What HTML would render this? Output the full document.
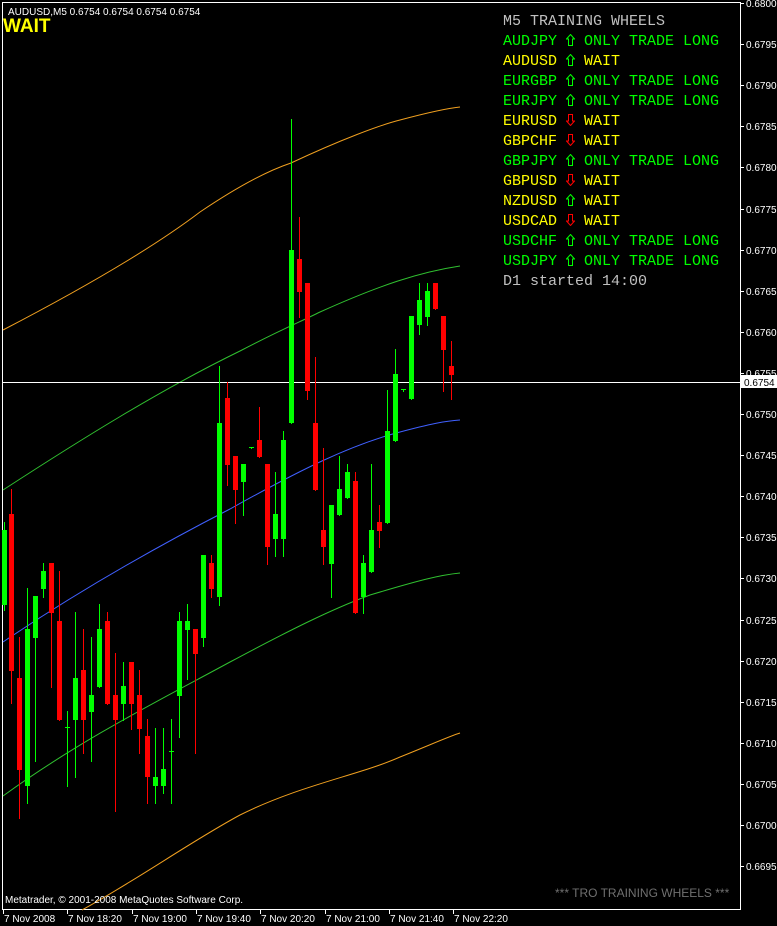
<!DOCTYPE html>
<html><head><meta charset="utf-8"><style>
html,body{margin:0;padding:0;background:#000;}
body{width:777px;height:926px;position:relative;overflow:hidden;font-family:"Liberation Sans",sans-serif;}
svg{position:absolute;left:0;top:0;}
.panel{position:absolute;left:503px;top:12px;font-family:"Liberation Mono",monospace;font-size:15px;line-height:20px;white-space:pre;}
.g{color:#00ff00}.y{color:#ffff00}.w{color:#c0c0c0}
.a{display:inline-block;width:9px;height:12px;vertical-align:-1px;}
</style></head><body>
<svg width="777" height="926" xmlns="http://www.w3.org/2000/svg" shape-rendering="crispEdges">
<rect x="2.5" y="2.5" width="738" height="907" fill="none" stroke="#fff" stroke-width="1"/>
<g fill="none" stroke-width="1" shape-rendering="auto">
<path d="M3,330 C80,290 150,250 200,212 C240,185 270,170 291,163 C340,140 380,125 400,120 C430,112 450,108 460,107" stroke="#f0a020"/>
<path d="M3,490 C80,440 160,390 240,351 C280,330 300,322 320,312 C380,285 420,272 460,266" stroke="#30c030"/>
<path d="M3,642 C80,590 160,545 230,509 C300,470 350,445 400,432 C430,424 445,421 460,420" stroke="#4060ff"/>
<path d="M3,796 C80,740 160,700 230,662 C290,630 330,610 370,595 C420,580 440,575 460,573" stroke="#30c030"/>
<path d="M82,910 C140,878 190,842 240,815 C300,785 360,775 400,757 C430,745 450,736 460,733" stroke="#f0a020"/>
</g>
<line x1="3" y1="382.5" x2="740" y2="382.5" stroke="#fff"/>
<g id="c"></g>
<g fill="#fff" font-size="10" font-family="Liberation Sans,sans-serif">
<text x="8" y="15" font-size="10">AUDUSD,M5  0.6754 0.6754 0.6754 0.6754</text>
<text x="5" y="903" font-size="10">Metatrader, © 2001-2008 MetaQuotes Software Corp.</text>
<text x="555" y="897" font-size="12" fill="#707070">*** TRO TRAINING WHEELS ***</text>
</g>
<text x="3" y="32" font-size="19" font-weight="bold" fill="#ffff00" font-family="Liberation Sans,sans-serif">WAIT</text>
<g id="ax" fill="#fff" font-size="10" font-family="Liberation Sans,sans-serif"></g>
<rect x="741" y="375" width="36" height="13" fill="#fff"/>
<text x="744" y="386" font-size="10" fill="#000" font-family="Liberation Sans,sans-serif">0.6754</text>
</svg>
<div class="panel"><span class="w">M5 TRAINING WHEELS</span>
<span class="g">AUDJPY <svg class="a" viewBox="0 0 9 12" style="position:static"><path d="M4.5,0.5 L8.5,5 L6.5,5 L6.5,11.5 L2.5,11.5 L2.5,5 L0.5,5 Z" fill="none" stroke="#00ff00"/></svg> ONLY TRADE LONG</span>
<span class="y">AUDUSD <svg class="a" viewBox="0 0 9 12" style="position:static"><path d="M4.5,0.5 L8.5,5 L6.5,5 L6.5,11.5 L2.5,11.5 L2.5,5 L0.5,5 Z" fill="none" stroke="#00ff00"/></svg> WAIT</span>
<span class="g">EURGBP <svg class="a" viewBox="0 0 9 12" style="position:static"><path d="M4.5,0.5 L8.5,5 L6.5,5 L6.5,11.5 L2.5,11.5 L2.5,5 L0.5,5 Z" fill="none" stroke="#00ff00"/></svg> ONLY TRADE LONG</span>
<span class="g">EURJPY <svg class="a" viewBox="0 0 9 12" style="position:static"><path d="M4.5,0.5 L8.5,5 L6.5,5 L6.5,11.5 L2.5,11.5 L2.5,5 L0.5,5 Z" fill="none" stroke="#00ff00"/></svg> ONLY TRADE LONG</span>
<span class="y">EURUSD <svg class="a" viewBox="0 0 9 12" style="position:static"><path d="M4.5,11.5 L8.5,7 L6.5,7 L6.5,0.5 L2.5,0.5 L2.5,7 L0.5,7 Z" fill="none" stroke="#ff0000"/></svg> WAIT</span>
<span class="y">GBPCHF <svg class="a" viewBox="0 0 9 12" style="position:static"><path d="M4.5,11.5 L8.5,7 L6.5,7 L6.5,0.5 L2.5,0.5 L2.5,7 L0.5,7 Z" fill="none" stroke="#ff0000"/></svg> WAIT</span>
<span class="g">GBPJPY <svg class="a" viewBox="0 0 9 12" style="position:static"><path d="M4.5,0.5 L8.5,5 L6.5,5 L6.5,11.5 L2.5,11.5 L2.5,5 L0.5,5 Z" fill="none" stroke="#00ff00"/></svg> ONLY TRADE LONG</span>
<span class="y">GBPUSD <svg class="a" viewBox="0 0 9 12" style="position:static"><path d="M4.5,11.5 L8.5,7 L6.5,7 L6.5,0.5 L2.5,0.5 L2.5,7 L0.5,7 Z" fill="none" stroke="#ff0000"/></svg> WAIT</span>
<span class="y">NZDUSD <svg class="a" viewBox="0 0 9 12" style="position:static"><path d="M4.5,0.5 L8.5,5 L6.5,5 L6.5,11.5 L2.5,11.5 L2.5,5 L0.5,5 Z" fill="none" stroke="#00ff00"/></svg> WAIT</span>
<span class="y">USDCAD <svg class="a" viewBox="0 0 9 12" style="position:static"><path d="M4.5,11.5 L8.5,7 L6.5,7 L6.5,0.5 L2.5,0.5 L2.5,7 L0.5,7 Z" fill="none" stroke="#ff0000"/></svg> WAIT</span>
<span class="g">USDCHF <svg class="a" viewBox="0 0 9 12" style="position:static"><path d="M4.5,0.5 L8.5,5 L6.5,5 L6.5,11.5 L2.5,11.5 L2.5,5 L0.5,5 Z" fill="none" stroke="#00ff00"/></svg> ONLY TRADE LONG</span>
<span class="g">USDJPY <svg class="a" viewBox="0 0 9 12" style="position:static"><path d="M4.5,0.5 L8.5,5 L6.5,5 L6.5,11.5 L2.5,11.5 L2.5,5 L0.5,5 Z" fill="none" stroke="#00ff00"/></svg> ONLY TRADE LONG</span>
<span class="w">D1 started 14:00</span></div>
<script>
var C=[[4,522,610,530,605,'g'],[11,489,703,514,671,'r'],[19,637,818,678,770,'r'],[27,588,803,629,786,'g'],[35,596,761,596,638,'g'],[43,563,597,571,589,'g'],[51,563,687,563,613,'r'],[59,571,720,621,720,'r'],[67,711,786,727,729,'g'],[75,612,777,678,720,'g'],[83,629,753,670,720,'r'],[91,637,761,695,712,'g'],[99,604,687,629,687,'g'],[107,612,704,621,704,'r'],[115,653,811,695,720,'r'],[123,662,720,686,704,'g'],[131,662,729,662,704,'r'],[139,670,753,695,729,'r'],[147,719,803,736,777,'r'],[155,728,803,777,786,'g'],[163,728,793,769,786,'g'],[171,719,803,751,753,'g'],[179,612,737,621,696,'g'],[187,604,679,621,630,'g'],[195,629,753,629,654,'r'],[203,555,646,555,638,'g'],[211,555,597,563,589,'r'],[219,366,605,423,597,'g'],[227,382,485,398,465,'r'],[235,456,523,456,490,'r'],[243,464,515,464,482,'g'],[251,448,448,447,449,'g'],[259,407,457,440,457,'r'],[267,464,564,464,547,'r'],[275,472,556,514,539,'g'],[283,431,556,440,539,'g'],[291,119,423,250,423,'g'],[299,217,317,259,292,'r'],[307,283,399,283,391,'r'],[315,357,490,423,490,'r'],[323,448,564,530,547,'r'],[331,505,597,505,564,'g'],[339,456,515,489,515,'g'],[347,464,498,472,498,'g'],[355,472,613,481,613,'r'],[363,555,613,563,597,'g'],[371,464,572,530,572,'g'],[379,505,547,522,531,'r'],[387,390,523,431,523,'g'],[395,349,441,374,441,'g'],[403,389,391,389,391,'g'],[411,316,399,316,399,'g'],[419,283,334,300,325,'g'],[427,283,325,291,317,'g'],[435,283,309,283,309,'r'],[443,316,391,316,350,'r'],[451,341,399,366,375,'r']];
var s='';C.forEach(function(c){var col=c[5]=='g'?'#00ff00':'#ff0000';
s+='<rect x="'+c[0]+'" y="'+c[1]+'" width="1" height="'+(c[2]-c[1]+1)+'" fill="'+col+'"/>';
if(c[4]-c[3]<=2){s+='<rect x="'+(c[0]-2)+'" y="'+c[3]+'" width="5" height="1" fill="'+col+'"/>';}
else s+='<rect x="'+(c[0]-2)+'" y="'+c[3]+'" width="5" height="'+(c[4]-c[3])+'" fill="'+col+'"/>';});
document.getElementById('c').innerHTML=s;
var a='<rect x="740" y="2" width="1" height="908" fill="#fff"/>';
for(var i=0;i<22;i++){var y=Math.round(3+i*41.1);var p=(0.68-i*0.0005).toFixed(4);
a+='<rect x="741" y="'+y+'" width="3" height="1"/>';
a+='<text x="746" y="'+(y+4)+'">'+p+'</text>';}
var T=['7 Nov 2008','7 Nov 18:20','7 Nov 19:00','7 Nov 19:40','7 Nov 20:20','7 Nov 21:00','7 Nov 21:40','7 Nov 22:20'];
T.forEach(function(t,i){var x=3+i*64.3;x=Math.round(x);a+='<rect x="'+x+'" y="910" width="1" height="4"/><text x="'+(x+1)+'" y="922">'+t+'</text>';});
document.getElementById('ax').innerHTML=a;
</script>
</body></html>
